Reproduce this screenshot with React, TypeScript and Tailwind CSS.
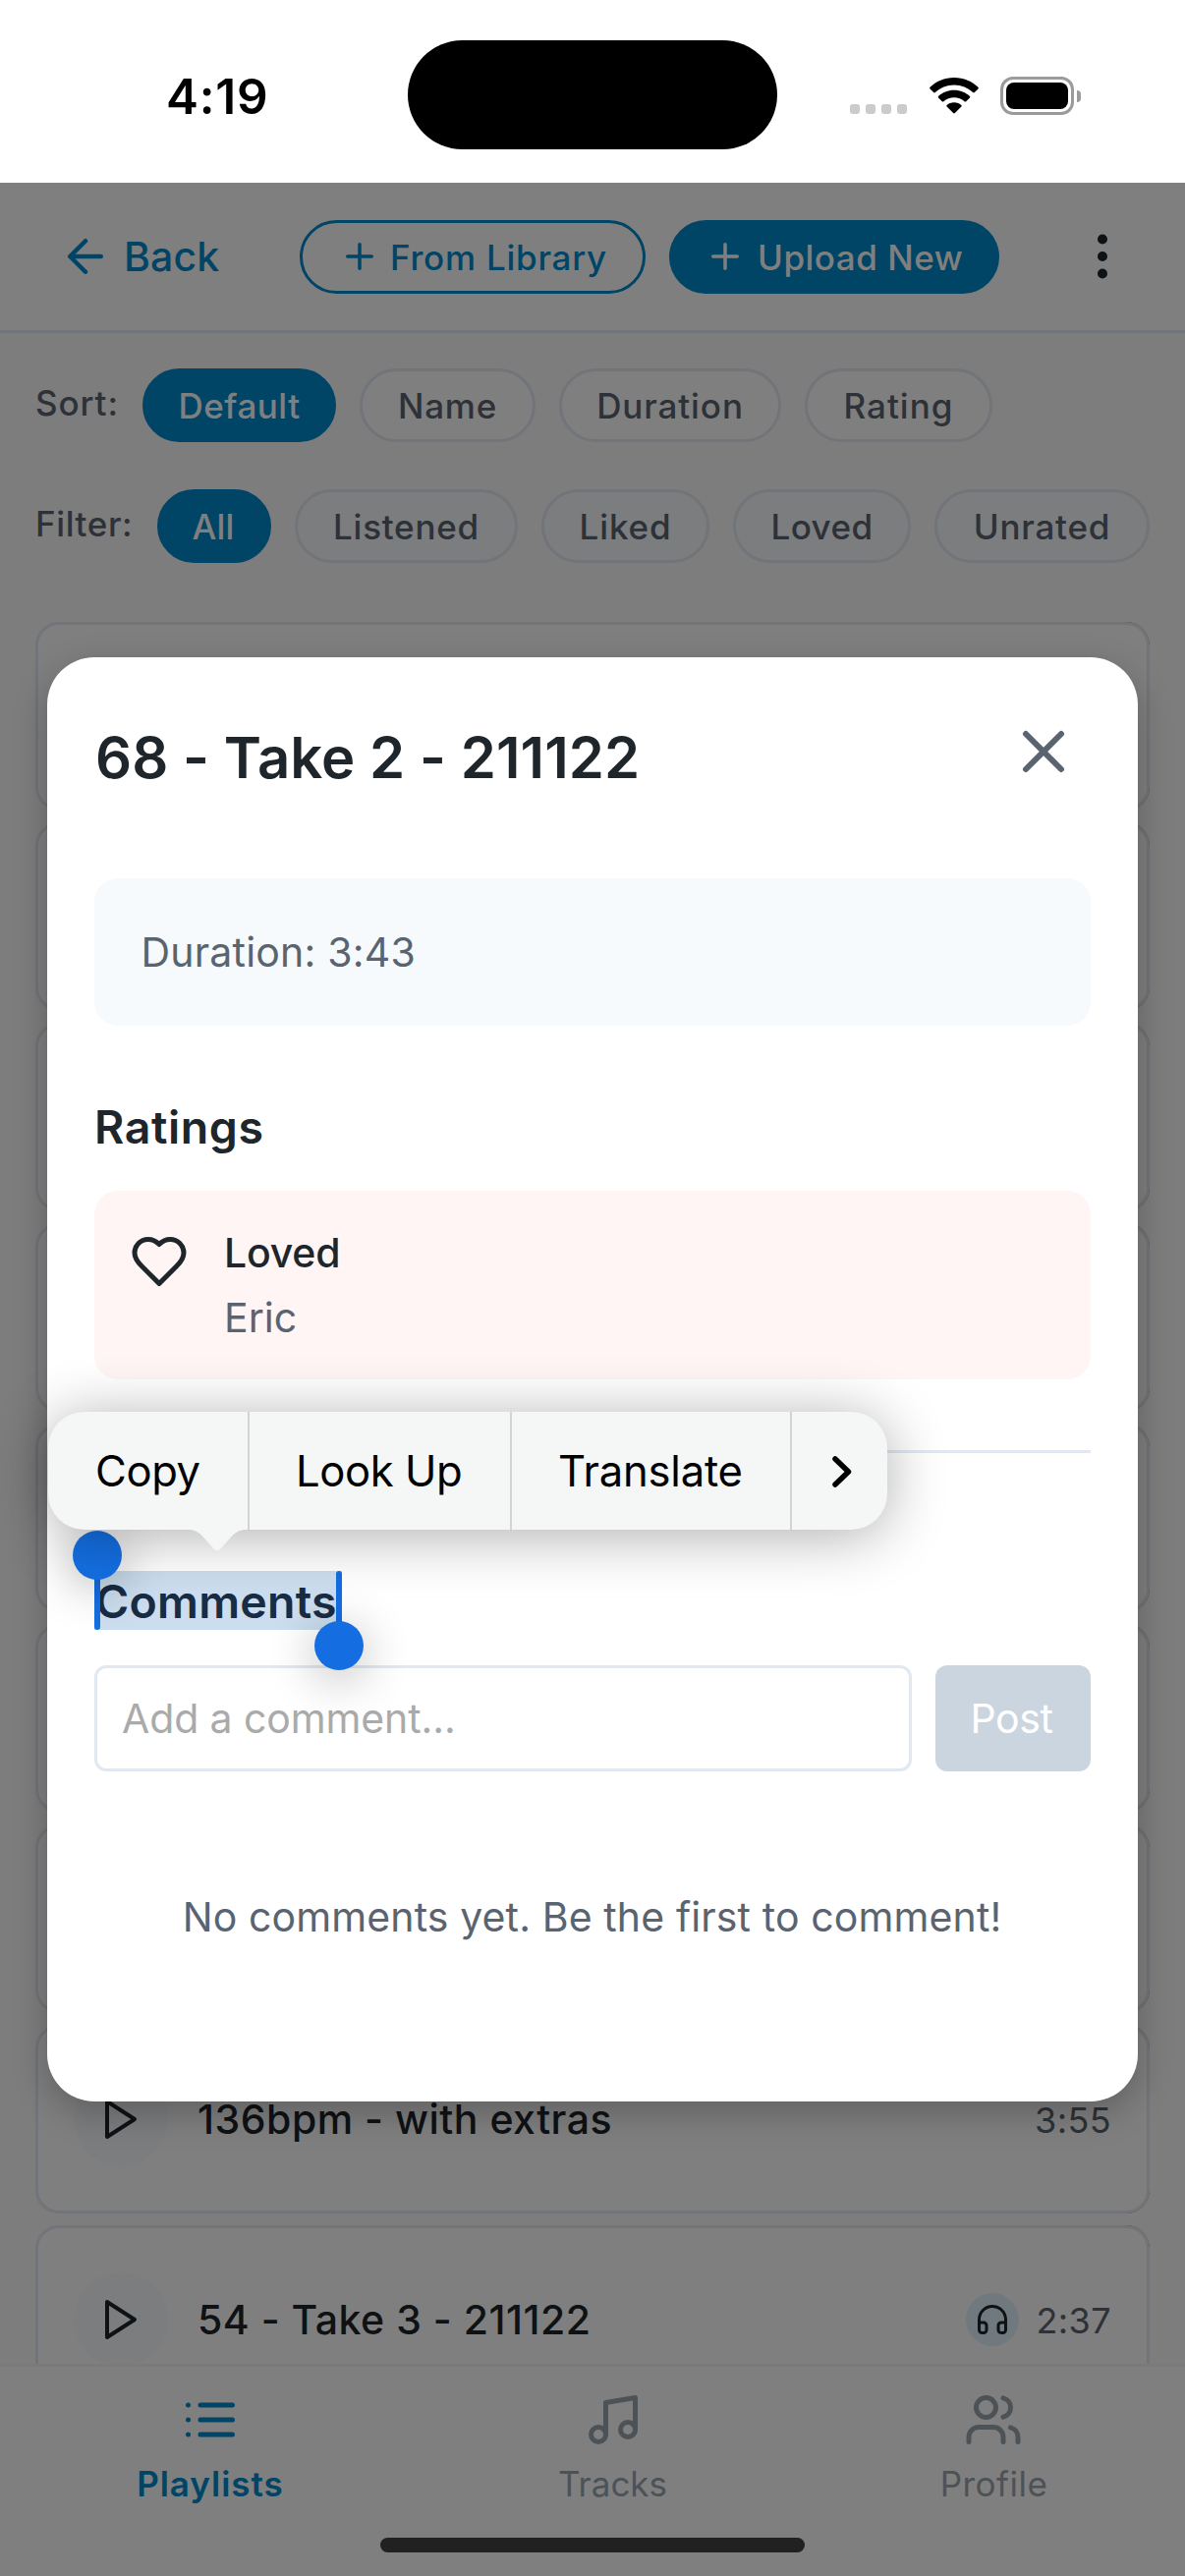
import type { ReactNode } from "react";

type ChipProps = { label: string; className: string; active?: boolean; tinted?: boolean };

function Chip({ label, className, active, tinted }: ChipProps) {
  const tone = active
    ? "border-[#0088cc] bg-[#0088cc] text-white"
    : tinted
      ? "border-[#e2e8f0] bg-[#f8fafc] text-[#5a6270]"
      : "border-[#e2e8f0] bg-white text-[#5a6270]";
  return (
    <button
      className={`flex h-[75px] shrink-0 items-center justify-center rounded-full border-[3px] pt-0.5 text-[35px] leading-none font-medium whitespace-nowrap ${tone} ${className}`}
    >
      {label}
    </button>
  );
}

function Stroke({ className, children }: { className: string; children: ReactNode }) {
  return (
    <svg
      className={`shrink-0 ${className}`}
      viewBox="0 0 24 24"
      fill="none"
      stroke="currentColor"
      strokeWidth={2}
      strokeLinecap="round"
      strokeLinejoin="round"
    >
      {children}
    </svg>
  );
}

function PlusIcon() {
  return (
    <Stroke className="size-[42px]">
      <path d="M12 5v14M5 12h14" />
    </Stroke>
  );
}

function StatusBar() {
  return (
    <div className="relative flex h-[186px] shrink-0 items-center bg-white">
      <span className="mt-3 ml-[169px] w-[246px] text-[49.5px] leading-none font-semibold tracking-[0.77px] text-black">
        4:19
      </span>
      <div className="mt-[7px] h-[111px] w-[376px] rounded-full bg-black" />
      <div className="mt-[9px] ml-[74px] flex items-center">
        <div className="flex gap-[6px] pt-[27px]">
          {[0, 1, 2, 3].map((i) => (
            <div key={i} className="size-[10px] rounded-[3px] bg-[#cbcbcb]" />
          ))}
        </div>
        <svg className="ml-[22.5px] h-[37px] w-[50px]" viewBox="0 0 50 37" fill="black">
          <path d="M25 0C34.8 0 43.5 3.9 49.5 9.8C50 10.3 50 10.9 49.5 11.4L45.8 15.1C45.3 15.6 44.7 15.6 44.2 15.1C39.2 10.4 32.5 7.5 25 7.5C17.5 7.5 10.8 10.4 5.8 15.1C5.3 15.6 4.7 15.6 4.2 15.1L.5 11.4C0 10.9 0 10.3 .5 9.8C6.5 3.9 15.2 0 25 0Z" />
          <path d="M25 12.7C31.3 12.7 36.9 15.1 41 18.9C41.5 19.4 41.5 20 41 20.5L37.2 24.2C36.7 24.7 36.2 24.7 35.6 24.2C32.8 21.7 29.1 20.2 25 20.2C20.9 20.2 17.2 21.7 14.4 24.2C13.8 24.7 13.3 24.7 12.8 24.2L9 20.5C8.5 20 8.5 19.4 9 18.9C13.1 15.1 18.7 12.7 25 12.7Z" />
          <path d="M25 25.3C27.9 25.3 30.4 26.3 32.3 28C32.9 28.5 32.9 29.1 32.4 29.6L25.9 36.1C25.3 36.7 24.7 36.7 24.1 36.1L17.6 29.6C17.1 29.1 17.1 28.5 17.7 28C19.6 26.3 22.1 25.3 25 25.3Z" />
        </svg>
        <div className="ml-[22.5px] flex h-[39px] w-[75px] items-center justify-center rounded-[13px] border-[3px] border-[#9b9b9b]">
          <div className="h-[27px] w-[63px] rounded-[8px] bg-black" />
        </div>
        <div className="ml-[3px] h-[12px] w-[4px] rounded-r-[4px] bg-[#9b9b9b]" />
      </div>
    </div>
  );
}

function Header() {
  return (
    <header className="flex h-[153px] items-center border-b-[3px] border-[#e2e8f0] bg-white pl-[60px]">
      <button className="flex w-[245px] items-center gap-[12px] text-[#0088cc]">
        <Stroke className="size-[54px]">
          <path d="M19 12H5M12 19l-7-7 7-7" />
        </Stroke>
        <span className="text-[41px] leading-none font-medium tracking-[0.1px]">Back</span>
      </button>
      <button className="flex h-[75px] w-[352px] items-center gap-[10px] rounded-full border-[3px] border-[#0088cc] pl-[37px] text-[#0088cc]">
        <PlusIcon />
        <span className="pt-0.5 text-[35px] leading-none font-medium tracking-[0.75px] whitespace-nowrap">From Library</span>
      </button>
      <button className="ml-[24px] flex h-[75px] w-[336px] items-center gap-[12px] rounded-full bg-[#0088cc] pl-[36px] text-white">
        <PlusIcon />
        <span className="pt-0.5 text-[35px] leading-none font-medium tracking-[0.5px] whitespace-nowrap">Upload New</span>
      </button>
      <Stroke className="ml-[74.5px] size-[60px] text-[#1e252b]">
        <circle cx="12" cy="12" r="1" fill="currentColor" />
        <circle cx="12" cy="5" r="1" fill="currentColor" />
        <circle cx="12" cy="19" r="1" fill="currentColor" />
      </Stroke>
    </header>
  );
}

type Track = { title?: string; time?: string; listened?: boolean };

function TrackCard({ title, time, listened }: Track) {
  return (
    <div className="h-[192px] shrink-0 rounded-[24px] bg-linear-to-r from-transparent from-90% to-[#ef4444] to-90%">
      <div className="flex h-full items-center rounded-[24px] border-[3px] border-[#e2e8f0] bg-white px-[36px]">
        <div className="flex size-[96px] items-center justify-center rounded-full bg-[#f8fafc] text-[#1e252b]">
          <Stroke className="size-[48px]">
            <path d="M5 3l14 9-14 9V3z" />
          </Stroke>
        </div>
        <span className="ml-[30px] flex-1 text-[41px] leading-none font-medium tracking-[0.5px] whitespace-nowrap text-[#1e252b]">
          {title}
        </span>
        {listened && (
          <div className="mr-[17px] flex size-[54px] items-center justify-center rounded-full bg-[#e0f2fa] text-[#1e252b]">
            <Stroke className="size-[36px]">
              <path d="M3 14h3a2 2 0 0 1 2 2v3a2 2 0 0 1-2 2H5a2 2 0 0 1-2-2v-7a9 9 0 0 1 18 0v7a2 2 0 0 1-2 2h-1a2 2 0 0 1-2-2v-3a2 2 0 0 1 2-2h3" />
            </Stroke>
          </div>
        )}
        <span className="pt-0.5 text-[36px] leading-none tracking-[0.4px] text-[#5a6470]">{time}</span>
      </div>
    </div>
  );
}

const tracks: Track[] = [
  {},
  {},
  {},
  {},
  {},
  {},
  {},
  { title: "136bpm - with extras", time: "3:55" },
  { title: "54 - Take 3 - 211122", time: "2:37", listened: true },
];

function TabBar() {
  return (
    <nav className="absolute inset-x-0 bottom-0 grid h-[216px] grid-cols-[427px_393px_382px] border-t-[3px] border-[#f4f4f5] bg-white pt-[24px] text-[35px] leading-[36px] text-[#9aa5ae]">
      <div className="flex flex-col items-center gap-[17px] text-[#0088cc]">
        <Stroke className="size-[60px]">
          <path d="M8 6h13M8 12h13M8 18h13M3 6h.01M3 12h.01M3 18h.01" />
        </Stroke>
        <span className="pl-px font-semibold tracking-[0.99px]">Playlists</span>
      </div>
      <div className="flex flex-col items-center gap-[17px]">
        <Stroke className="size-[60px]">
          <path d="M9 18V5l12-2v13" />
          <circle cx="6" cy="18" r="3" />
          <circle cx="18" cy="16" r="3" />
        </Stroke>
        <span>Tracks</span>
      </div>
      <div className="flex flex-col items-center gap-[17px]">
        <Stroke className="size-[60px]">
          <path d="M16 21v-2a4 4 0 0 0-4-4H6a4 4 0 0 0-4 4v2" />
          <circle cx="9" cy="7" r="4" />
          <path d="M22 21v-2a4 4 0 0 0-3-3.87M16 3.13a4 4 0 0 1 0 7.75" />
        </Stroke>
        <span className="pl-px tracking-[0.48px]">Profile</span>
      </div>
    </nav>
  );
}

function SelectedHeading() {
  return (
    <div className="relative mt-[120px] h-[60px] w-[252px] bg-[#cbddee] pl-px text-[46.5px] leading-[62px] font-semibold tracking-[0.25px] text-[#182c44]">
      Comments
      <div className="absolute top-0 left-0 h-[60px] w-[6px] rounded-full bg-[#146ee1]" />
      <div className="absolute -top-[41px] -left-[22px] size-[50px] rounded-full bg-[#146ee1] shadow-[0_8px_48px_rgba(0,0,0,0.3)]" />
      <div className="absolute top-0 right-0 h-[60px] w-[6px] rounded-full bg-[#146ee1]" />
      <div className="absolute top-[51px] -right-[22px] size-[50px] rounded-full bg-[#146ee1] shadow-[0_8px_48px_rgba(0,0,0,0.3)]" />
    </div>
  );
}

function TrackDialog() {
  return (
    <section className="flex h-[1470px] w-[1110px] flex-col rounded-[48px] bg-white px-[48px] pt-[66px] text-[41px] leading-none text-[#5a6470] shadow-[0_12px_36px_rgba(0,0,0,0.24)]">
      <div className="flex h-[72px] items-center justify-between pr-[12px] pl-px">
        <h2 className="text-[58px] leading-none font-semibold tracking-[0.07px] text-[#1e252b]">68 - Take 2 - 211122</h2>
        <Stroke className="mb-[12px] size-[72px]">
          <path d="M18 6L6 18M6 6l12 12" />
        </Stroke>
      </div>
      <div className="mt-[87px] flex h-[150px] items-center rounded-[24px] bg-[#f6fafd] pl-[47.5px] tracking-[0.2px]">
        Duration: 3:43
      </div>
      <h3 className="mt-[73px] text-[46.5px] leading-[60px] font-semibold tracking-[0.6px] text-[#1e252b]">Ratings</h3>
      <div className="mt-[35px] flex h-[192px] items-start gap-[36px] rounded-[24px] bg-[#fff5f5] pt-[30px] pl-[36px]">
        <Stroke className="mt-[12px] size-[60px] text-[#1e252b]">
          <path d="M19 14c1.49-1.46 3-3.21 3-5.5A5.5 5.5 0 0 0 16.5 3c-1.76 0-3 .5-4.5 2-1.5-1.5-2.74-2-4.5-2A5.5 5.5 0 0 0 2 8.5c0 2.3 1.5 4.05 3 5.5l7 7Z" />
        </Stroke>
        <div className="leading-[66px]">
          <p className="font-medium tracking-[-0.2px] text-[#1e252b]">Loved</p>
          <p>Eric</p>
        </div>
      </div>
      <div className="mt-[72px] h-[3px] shrink-0 bg-[#e2e8f0]" />
      <SelectedHeading />
      <div className="mt-[36px] flex h-[108px] gap-[24px]">
        <div className="flex w-[832px] items-center rounded-[12px] border-[3px] border-[#e2e8f0] pt-px pl-[25px] tracking-[-0.11px] text-[#aaaaaa]">
          Add a comment...
        </div>
        <button className="flex flex-1 items-center justify-center rounded-[12px] bg-[#cbd5e0] pr-[3px] tracking-[-0.4px] text-white">
          Post
        </button>
      </div>
      <p className="mt-[118px] pr-[1px] text-center leading-[60px] tracking-[0.12px] whitespace-nowrap">
        No comments yet. Be the first to comment!
      </p>
    </section>
  );
}

function EditMenu() {
  return (
    <div className="absolute top-[1251px] left-[49px] flex h-[120px] w-[854px] rounded-[37px] bg-[#f5f6f6] pt-px text-[43.6px] leading-none text-black shadow-[0_6px_60px_rgba(0,0,0,0.32)]">
      <div className="-mt-px flex w-[205px] items-center border-r-2 border-[#d3d3d3] pt-[2px] pl-[48px] tracking-[-0.4px]">Copy</div>
      <div className="-mt-px flex w-[267px] items-center border-r-2 border-[#d3d3d3] pt-[2px] pl-[47px] tracking-[-0.43px]">Look Up</div>
      <div className="-mt-px flex w-[285px] items-center border-r-2 border-[#d3d3d3] pt-[2px] pl-[47px] tracking-[-0.2px]">Translate</div>
      <div className="flex flex-1 items-center pl-[40px]">
        <svg
          className="h-[34px] w-[22px]"
          viewBox="0 0 22 34"
          fill="none"
          stroke="black"
          strokeWidth="5.5"
          strokeLinecap="round"
          strokeLinejoin="round"
        >
          <path d="M4 4L17.5 17L4 30" />
        </svg>
      </div>
      <svg className="absolute top-[119px] left-[142px] h-[24px] w-[62px]" viewBox="0 0 62 24" fill="#f5f6f6">
        <path d="M0 0V1C7 1 11 3.500 15 7.500L26.500 20.500Q30 24.500 33.500 20.500L45 7.500C49 3.500 53 1 60 1V0Z" />
      </svg>
    </div>
  );
}

export default function App() {
  return (
    <div className="flex h-[2622px] w-[1206px] flex-col overflow-hidden font-['Inter',sans-serif]">
      <StatusBar />
      <div className="relative h-[2436px] overflow-hidden bg-[#fafafa]">
        <Header />
        <div className="flex items-center gap-[24px] pt-[36px] pl-[36px]">
          <span className="-mr-[24px] w-[109px] pb-[5px] text-[35px] leading-none font-medium tracking-[0.9px] text-[#5a6270]">Sort:</span>
          <Chip label="Default" active className="w-[197px] tracking-[0.5px]" />
          <Chip label="Name" className="w-[179px] tracking-[0.8px]" />
          <Chip label="Duration" className="w-[226px] tracking-[0.9px]" />
          <Chip label="Rating" className="w-[191px] tracking-[1px]" />
        </div>
        <div className="flex items-center gap-[24px] pt-[48px] pl-[36px]">
          <span className="-mr-[24px] w-[124px] pb-[5px] text-[35px] leading-none font-medium tracking-[0.6px] text-[#5a6270]">Filter:</span>
          <Chip label="All" active className="w-[116px] pr-[2px] tracking-[0.2px]" />
          <Chip label="Listened" tinted className="w-[227px] tracking-[0.75px]" />
          <Chip label="Liked" tinted className="w-[171px] tracking-[0.85px]" />
          <Chip label="Loved" tinted className="w-[181px] tracking-[0.43px]" />
          <Chip label="Unrated" tinted className="w-[219px] tracking-[0.8px]" />
        </div>
        <div className="mt-[60px] flex flex-col gap-[12px] px-[36px]">
          {tracks.map((track, i) => (
            <TrackCard key={i} {...track} />
          ))}
        </div>
        <TabBar />
        <div className="absolute inset-0 flex items-center justify-center bg-black/50">
          <TrackDialog />
        </div>
        <EditMenu />
        <div className="absolute bottom-[24px] left-[387px] h-[15px] w-[432px] rounded-full bg-[#212121]" />
      </div>
    </div>
  );
}
